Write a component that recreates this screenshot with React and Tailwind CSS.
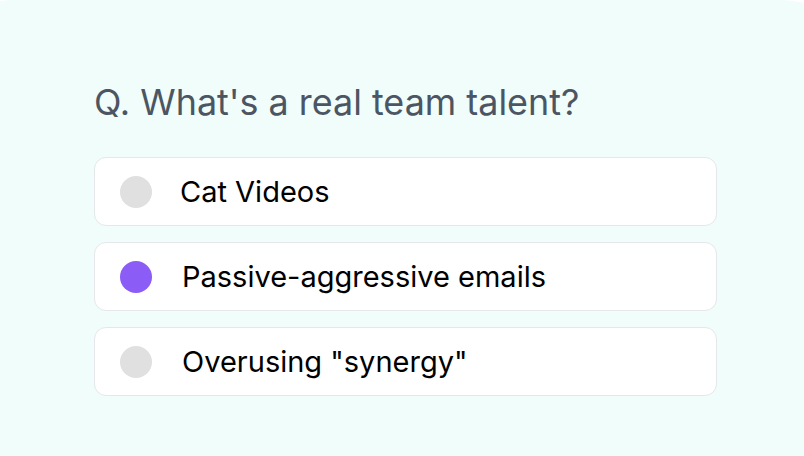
const OPTIONS = [
  { label: 'Cat Videos', picked: false, shift: 'gap-[28px]' },
  { label: 'Passive-aggressive emails', picked: true, shift: 'gap-[30px]' },
  { label: 'Overusing "synergy"', picked: false, shift: 'gap-[30px]' },
]

export default function App() {
  return (
    <div className="h-[456px] w-[804px] overflow-hidden bg-white" style={{ fontFamily: 'Inter, "Noto Sans", sans-serif' }}>
      <div className="-ml-[104px] h-full w-[1001px] rounded-t-[120px] bg-[#f0fdfa] pl-[198px] pt-[81px]">
        <div className="w-[623px]">
          <h2 className="text-[35.9px] leading-[42px] font-normal text-[#4b5563]">
            Q. What's a real team talent?
          </h2>
          <div className="mt-[34px] flex flex-col gap-[16px]">
            {OPTIONS.map((o) => (
              <div
                key={o.label}
                className={'flex h-[69px] items-center rounded-[12px] border border-[#e5e7eb] bg-white pl-[25px] ' + o.shift}
              >
                <span
                  className={
                    'h-[32px] w-[32px] shrink-0 rounded-full ' +
                    (o.picked ? 'bg-[#8b5cf6]' : 'bg-[#e0e0e0]')
                  }
                />
                <span className="text-[29px] leading-[34px] text-black">{o.label}</span>
              </div>
            ))}
          </div>
        </div>
      </div>
    </div>
  )
}
